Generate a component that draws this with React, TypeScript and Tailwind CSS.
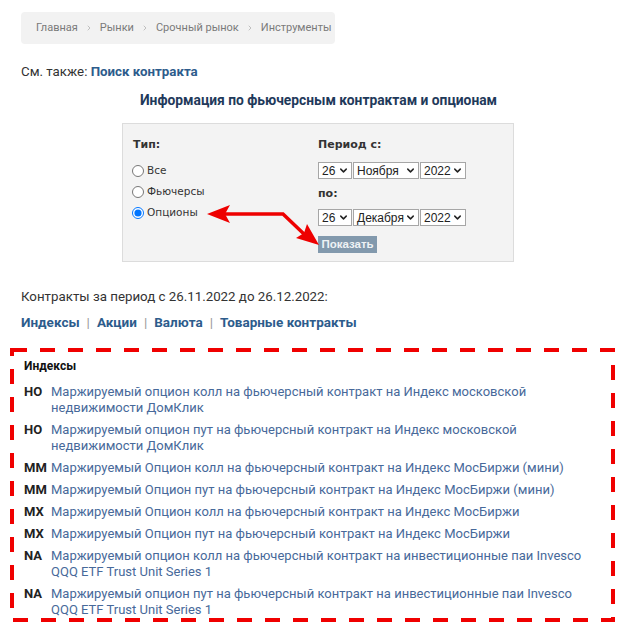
import { ChevronRight, ChevronDown } from "lucide-react";

const crumbs = ["Главная", "Рынки", "Срочный рынок", "Инструменты"];
const sections = ["Индексы", "Акции", "Валюта", "Товарные контракты"];

const contracts = [
  {
    code: "НО",
    name: "Маржируемый опцион колл на фьючерсный контракт на Индекс московской недвижимости ДомКлик",
  },
  {
    code: "НО",
    name: "Маржируемый опцион пут на фьючерсный контракт на Индекс московской недвижимости ДомКлик",
  },
  { code: "MM", name: "Маржируемый Опцион колл на фьючерсный контракт на Индекс МосБиржи (мини)" },
  { code: "MM", name: "Маржируемый Опцион пут на фьючерсный контракт на Индекс МосБиржи (мини)" },
  { code: "MX", name: "Маржируемый Опцион колл на фьючерсный контракт на Индекс МосБиржи" },
  { code: "MX", name: "Маржируемый Опцион пут на фьючерсный контракт на Индекс МосБиржи" },
  {
    code: "NA",
    name: "Маржируемый опцион колл на фьючерсный контракт на инвестиционные паи Invesco QQQ ETF Trust Unit Series 1",
  },
  {
    code: "NA",
    name: "Маржируемый опцион пут на фьючерсный контракт на инвестиционные паи Invesco QQQ ETF Trust Unit Series 1",
  },
];

const Select = ({ value, width }: { value: string; width: string }) => (
  <div
    className={`flex h-[17px] items-center justify-between border border-[#a6a6a6] bg-white pl-[3px] pr-[2px] font-['Liberation_Sans',sans-serif] text-[12px] leading-none text-[#222] ${width}`}
  >
    <span>{value}</span>
    <ChevronDown className="h-[11px] w-[11px] text-[#222]" strokeWidth={3.2} />
  </div>
);

const Radio = ({ label, checked }: { label: string; checked?: boolean }) => (
  <label className="flex h-[21px] items-center gap-[3px]">
    <input
      type="radio"
      name="kind"
      defaultChecked={checked}
      className="m-0 h-[12px] w-[12px]"
    />
    <span>{label}</span>
  </label>
);

export default function App() {
  return (
    <div className="relative min-h-[627px] w-[623px] bg-white font-['Roboto',sans-serif] text-[13px] text-[#333]">
      <div className="px-[21px] pt-[12px]">
        <nav className="flex h-[32px] w-[314px] items-center gap-[7px] whitespace-nowrap rounded-[4px] bg-[#f2f2f2] px-[15px] text-[11px] text-[#7a7a7a]">
          {crumbs.map((c, i) => (
            <div key={c} className="flex items-center gap-[7px]">
              {i > 0 && <ChevronRight className="h-[8px] w-[8px] text-[#b5b5b5]" strokeWidth={2.5} />}
              <span>{c}</span>
            </div>
          ))}
        </nav>

        <p className="mt-[20px] text-[13.3px] leading-4">
          См. также: <a className="font-bold text-[#2d5c8c]">Поиск контракта</a>
        </p>

        <h2 className="mt-[12px] pl-[14px] text-center text-[13.8px] font-bold leading-4 text-[#1f3a5b]">
          Информация по фьючерсным контрактам и опционам
        </h2>

        <form className="ml-[101px] mt-[15px] grid w-[392px] grid-cols-[186px_1fr] border border-[#dcdcdc] bg-[#f3f3f3] pb-[8px] pl-[9px] pt-[14px] font-['DejaVu_Sans',sans-serif] text-[10.5px] text-[#333]">
          <div>
            <p className="h-[14px] pl-[1px] text-[11px] font-bold leading-[14px]">Тип:</p>
            <div className="mt-[8px]">
              <Radio label="Все" />
              <Radio label="Фьючерсы" />
              <Radio label="Опционы" checked />
            </div>
          </div>
          <div>
            <p className="h-[14px] text-[11px] font-bold leading-[14px]">Период с:</p>
            <div className="mt-[10px] flex gap-[1px]">
              <Select value="26" width="w-[34px]" />
              <Select value="Ноября" width="w-[66px]" />
              <Select value="2022" width="w-[46px]" />
            </div>
            <p className="mt-[8px] h-[14px] text-[11px] font-bold leading-[14px]">по:</p>
            <div className="mt-[8px] flex gap-[1px]">
              <Select value="26" width="w-[34px]" />
              <Select value="Декабря" width="w-[66px]" />
              <Select value="2022" width="w-[46px]" />
            </div>
            <button
              type="button"
              className="mt-[10px] h-[17px] w-[59px] bg-[#8299ad] font-['Liberation_Sans',sans-serif] text-[11.5px] font-bold leading-[17px] text-[#eef2f5]"
            >
              Показать
            </button>
          </div>
        </form>

        <p className="mt-[27px] text-[13.3px] leading-4">Контракты за период с 26.11.2022 до 26.12.2022:</p>
        <div className="mt-[9px] flex items-center text-[13.5px] leading-4">
          {sections.map((s, i) => (
            <span key={s} className="flex items-center">
              {i > 0 && <span className="mx-[7px] font-normal text-[#999]">|</span>}
              <a className="font-bold text-[#2d5c8c]">{s}</a>
            </span>
          ))}
        </div>
      </div>

      <section className="relative mx-[10px] mt-[18px] h-[274px] px-[14px] pt-[10px]">
        <svg className="pointer-events-none absolute inset-0" width="605" height="274">
          <rect
            x="2"
            y="2"
            width="601"
            height="270"
            fill="none"
            stroke="#f00000"
            strokeWidth="4"
            strokeDasharray="15 13"
          />
        </svg>
        <h3 className="text-[12px] font-bold leading-4 text-[#111]">Индексы</h3>
        <ul className="mt-[10px]">
          {contracts.map((c, i) => (
            <li key={i} className="mb-[6px] grid grid-cols-[27px_1fr] leading-4">
              <span className="font-bold text-[#222]">{c.code}</span>
              <a className="text-[#47699a]">{c.name}</a>
            </li>
          ))}
        </ul>
      </section>

      <svg className="pointer-events-none absolute left-0 top-0" width="623" height="627">
        <path d="M222 214 L283 214 L305 235" fill="none" stroke="#ee0000" strokeWidth="3.5" strokeLinejoin="miter" />
        <polygon points="207,214 230,205 225,214 230,223" fill="#ee0000" />
        <polygon points="319,245 296,238 304,233 307,224" fill="#ee0000" />
      </svg>
    </div>
  );
}
